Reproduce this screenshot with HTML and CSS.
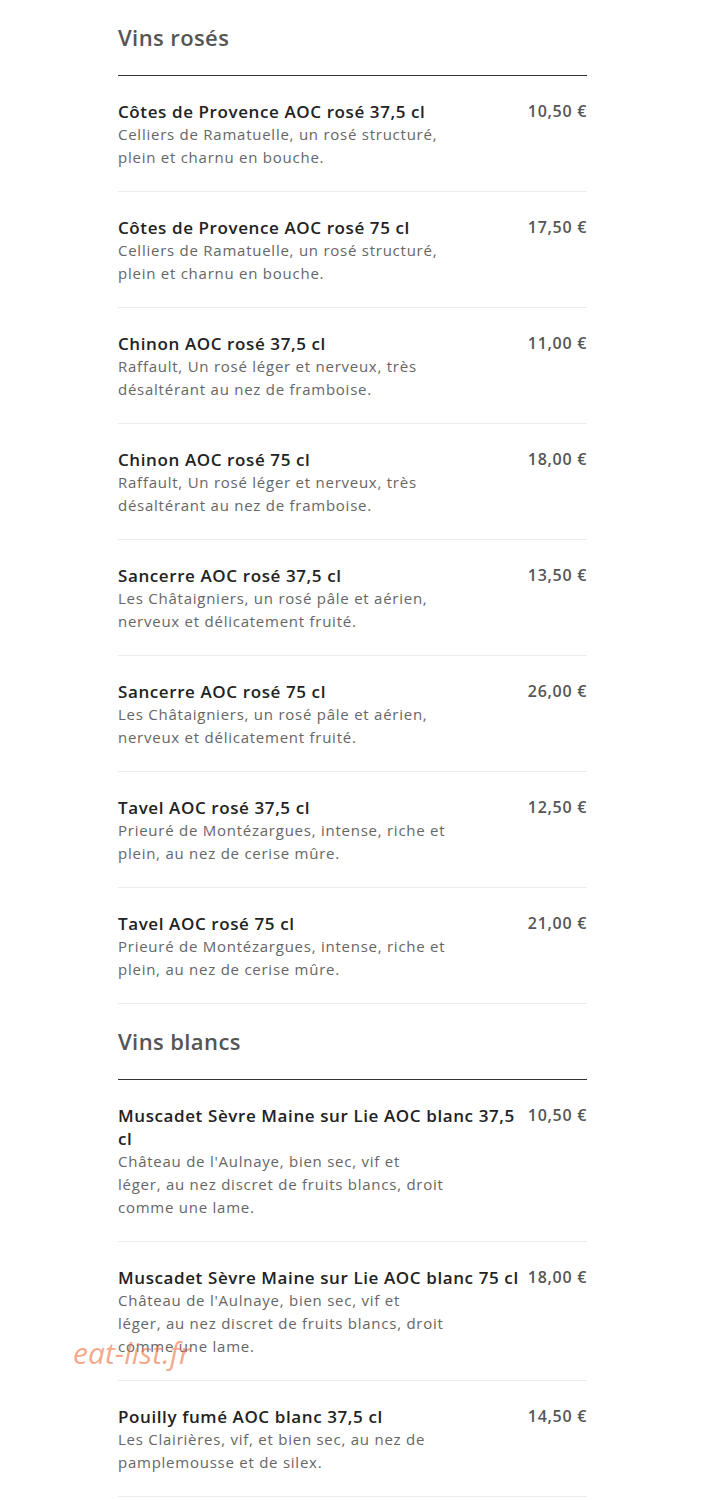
FILE: index.html
```html
<!DOCTYPE html>
<html lang="fr">
<head>
<meta charset="utf-8">
<title>Carte des vins</title>
<link rel="stylesheet" href="styles.css">
</head>
<body>
<div class="page">
  <section class="section">
    <h2 class="section-title">Vins rosés</h2>
    <div class="item">
      <div class="item-text">
        <div class="item-name">Côtes de Provence AOC rosé 37,5 cl</div>
        <div class="item-desc">Celliers de Ramatuelle, un rosé structuré, plein et charnu en bouche.</div>
      </div>
      <div class="item-price">10,50 €</div>
    </div>
    <div class="item">
      <div class="item-text">
        <div class="item-name">Côtes de Provence AOC rosé 75 cl</div>
        <div class="item-desc">Celliers de Ramatuelle, un rosé structuré, plein et charnu en bouche.</div>
      </div>
      <div class="item-price">17,50 €</div>
    </div>
    <div class="item">
      <div class="item-text">
        <div class="item-name">Chinon AOC rosé 37,5 cl</div>
        <div class="item-desc">Raffault, Un rosé léger et nerveux, très désaltérant au nez de framboise.</div>
      </div>
      <div class="item-price">11,00 €</div>
    </div>
    <div class="item">
      <div class="item-text">
        <div class="item-name">Chinon AOC rosé 75 cl</div>
        <div class="item-desc">Raffault, Un rosé léger et nerveux, très désaltérant au nez de framboise.</div>
      </div>
      <div class="item-price">18,00 €</div>
    </div>
    <div class="item">
      <div class="item-text">
        <div class="item-name">Sancerre AOC rosé 37,5 cl</div>
        <div class="item-desc">Les Châtaigniers, un rosé pâle et aérien, nerveux et délicatement fruité.</div>
      </div>
      <div class="item-price">13,50 €</div>
    </div>
    <div class="item">
      <div class="item-text">
        <div class="item-name">Sancerre AOC rosé 75 cl</div>
        <div class="item-desc">Les Châtaigniers, un rosé pâle et aérien, nerveux et délicatement fruité.</div>
      </div>
      <div class="item-price">26,00 €</div>
    </div>
    <div class="item">
      <div class="item-text">
        <div class="item-name">Tavel AOC rosé 37,5 cl</div>
        <div class="item-desc">Prieuré de Montézargues, intense, riche et plein, au nez de cerise mûre.</div>
      </div>
      <div class="item-price">12,50 €</div>
    </div>
    <div class="item">
      <div class="item-text">
        <div class="item-name">Tavel AOC rosé 75 cl</div>
        <div class="item-desc">Prieuré de Montézargues, intense, riche et plein, au nez de cerise mûre.</div>
      </div>
      <div class="item-price">21,00 €</div>
    </div>
  </section>
  <section class="section">
    <h2 class="section-title">Vins blancs</h2>
    <div class="item">
      <div class="item-text">
        <div class="item-name">Muscadet Sèvre Maine sur Lie AOC blanc 37,5 cl</div>
        <div class="item-desc">Château de l'Aulnaye, bien sec, vif et léger, au nez discret de fruits blancs, droit comme une lame.</div>
      </div>
      <div class="item-price">10,50 €</div>
    </div>
    <div class="item">
      <div class="item-text">
        <div class="item-name">Muscadet Sèvre Maine sur Lie AOC blanc 75 cl</div>
        <div class="item-desc">Château de l'Aulnaye, bien sec, vif et léger, au nez discret de fruits blancs, droit comme une lame.</div>
      </div>
      <div class="item-price">18,00 €</div>
    </div>
    <div class="item">
      <div class="item-text">
        <div class="item-name">Pouilly fumé AOC blanc 37,5 cl</div>
        <div class="item-desc">Les Clairières, vif, et bien sec, au nez de pamplemousse et de silex.</div>
      </div>
      <div class="item-price">14,50 €</div>
    </div>
  </section>
  <div class="watermark">eat-list.fr</div>
</div>
</body>
</html>
```
FILE: styles.css
```css
html, body {
  margin: 0;
  padding: 0;
  background: #ffffff;
}
body {
  font-family: "Open Sans", "Liberation Sans", sans-serif;
}
.page {
  position: relative;
  width: 469px;
  margin-left: 118px;
  padding-top: 22px;
}
.section + .section {
  margin-top: 22px;
}
.section-title {
  margin: 0;
  font-size: 22px;
  line-height: 30px;
  font-weight: 600;
  letter-spacing: 0.4px;
  color: #555555;
  padding-bottom: 23px;
  border-bottom: 1px solid #333333;
}
.item {
  display: flex;
  align-items: flex-start;
  gap: 3px;
  padding: 24px 0 22px;
  border-bottom: 1px solid #ececec;
}
.item-text {
  flex: 1;
  min-width: 0;
}
.item-name {
  font-size: 17px;
  line-height: 23px;
  font-weight: 600;
  letter-spacing: 0.6px;
  color: #222222;
}
.item-desc {
  max-width: 328px;
  font-size: 15px;
  line-height: 23px;
  letter-spacing: 0.75px;
  color: #666666;
}
.item-price {
  flex-shrink: 0;
  font-size: 16px;
  line-height: 23px;
  font-weight: 600;
  letter-spacing: 0.7px;
  color: #555555;
}
.watermark {
  position: absolute;
  left: -45px;
  top: 1338px;
  font-size: 30px;
  line-height: 30px;
  font-style: italic;
  color: rgba(240, 110, 60, 0.6);
  pointer-events: none;
}
```
